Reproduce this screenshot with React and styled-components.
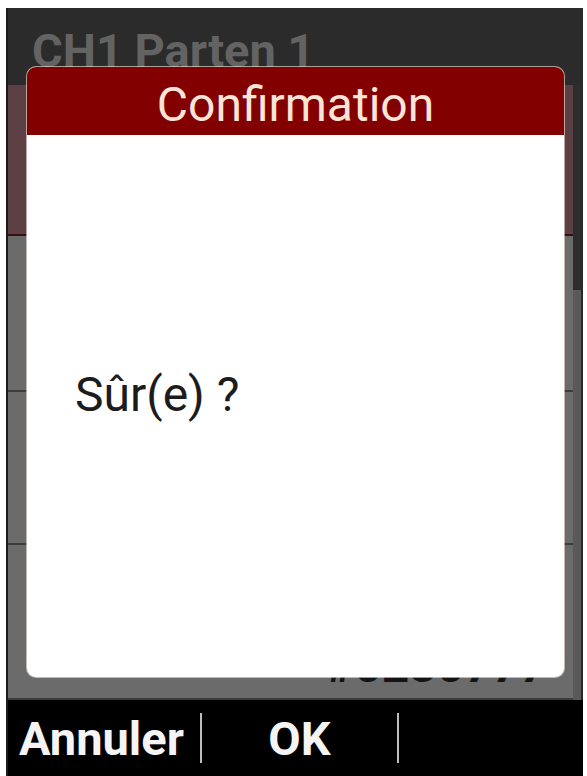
import React from 'react';
import styled, { createGlobalStyle } from 'styled-components';

const GlobalStyle = createGlobalStyle`
  html, body {
    margin: 0;
    padding: 0;
    background: #fff;
  }
  body {
    font-family: Roboto, "Liberation Sans", Arial, sans-serif;
  }
`;

const Frame = styled.div`
  width: 587px;
  height: 776px;
  padding: 8px 4px 0 6px;
  box-sizing: border-box;
  overflow: hidden;
`;

const Screen = styled.div`
  position: relative;
  display: flex;
  flex-direction: column;
  height: 100%;
  background: #000;
  border-left: 2px solid #1a1a1a;
  box-sizing: border-box;
`;

const TitleBar = styled.div`
  height: 77px;
  flex-shrink: 0;
  background: #2b2b2b;
  color: #636363;
  font-weight: 700;
  font-size: 47px;
  line-height: 1;
  padding: 19px 0 0 24px;
  box-sizing: border-box;
  white-space: nowrap;
  overflow: hidden;
`;

const ListArea = styled.div`
  flex: 1;
  display: flex;
`;

const Rows = styled.div`
  flex: 1;
  display: flex;
  flex-direction: column;
`;

const Row = styled.div`
  height: ${(p) => p.h}px;
  flex-shrink: 0;
  background: ${(p) => (p.selected ? '#5d4044' : '#6b6b6b')};
  border-bottom: 2px solid ${(p) => (p.selected ? '#3a0d14' : '#3d3d3d')};
  box-sizing: border-box;
  display: flex;
  align-items: flex-end;
  justify-content: flex-end;
  padding: 0 26px 8px 0;
  color: #141414;
  font-size: 48px;
  font-weight: 700;
  line-height: 1;
`;

const ScrollTrack = styled.div`
  width: 10px;
  flex-shrink: 0;
  background: #595959;
  border-right: 2px solid #2a2a2a;
  box-sizing: border-box;
`;

const ScrollThumb = styled.div`
  height: 205px;
  background: #2d2d2d;
`;

const SoftKeys = styled.div`
  height: 76px;
  flex-shrink: 0;
  background: #000;
  display: flex;
  align-items: center;
`;

const SoftKey = styled.div`
  width: ${(p) => p.w}px;
  height: 50px;
  display: flex;
  align-items: center;
  justify-content: ${(p) => (p.center ? 'center' : 'flex-start')};
  padding-left: ${(p) => (p.center ? 0 : 11)}px;
  box-sizing: border-box;
  color: #f4f4f4;
  font-weight: 700;
  font-size: 47px;
  border-right: ${(p) => (p.divider ? '2px solid #bdbdbd' : 'none')};
`;

const Dialog = styled.div`
  position: absolute;
  left: 19px;
  top: 59px;
  width: 537px;
  height: 610px;
  background: #fff;
  border-radius: 9px;
  overflow: hidden;
  display: flex;
  flex-direction: column;
  box-shadow: 0 0 0 1px rgba(255, 235, 225, 0.6);
`;

const DialogHeader = styled.div`
  height: 68px;
  flex-shrink: 0;
  background: #820000;
  color: #fbe4d8;
  font-size: 48px;
  line-height: 1;
  display: flex;
  align-items: center;
  justify-content: center;
  padding-top: 8px;
  box-sizing: border-box;
`;

const DialogBody = styled.div`
  flex: 1;
  display: flex;
  align-items: center;
  padding: 0 0 24px 48px;
  color: #1c1c1c;
  font-size: 48px;
`;

const App = () => (
  <>
    <GlobalStyle />
    <Frame>
      <Screen>
        <TitleBar>CH1 Parten 1</TitleBar>
        <ListArea>
          <Rows>
            <Row selected h={151} />
            <Row h={156} />
            <Row h={153} />
            <Row h={155}>#0230777</Row>
          </Rows>
          <ScrollTrack>
            <ScrollThumb />
          </ScrollTrack>
        </ListArea>
        <SoftKeys>
          <SoftKey w={194} divider>Annuler</SoftKey>
          <SoftKey w={197} center divider>OK</SoftKey>
          <SoftKey w={180} center />
        </SoftKeys>
        <Dialog>
          <DialogHeader>Confirmation</DialogHeader>
          <DialogBody>Sûr(e) ?</DialogBody>
        </Dialog>
      </Screen>
    </Frame>
  </>
);

export default App;
